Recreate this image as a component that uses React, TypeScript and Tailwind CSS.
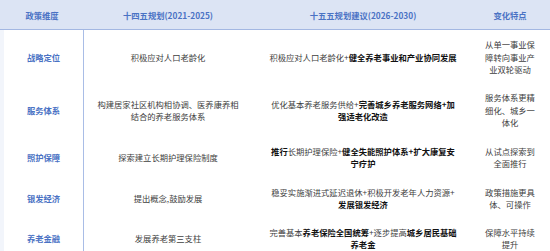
const rows = [
  {
    label: "战略定位",
    h: "h-[54px]",
    old: ["积极应对人口老龄化"],
    next: [[["积极应对人口老龄化+", false], ["健全养老事业和产业协同发展", true]]],
    change: ["从单一事业保", "障转向事业产", "业双轮驱动"],
  },
  {
    label: "服务体系",
    h: "h-[52px]",
    old: ["构建居家社区机构相协调、医养康养相", "结合的养老服务体系"],
    next: [
      [["优化基本养老服务供给+", false], ["完善城乡养老服务网络+加", true]],
      [["强适老化改造", true]],
    ],
    change: ["服务体系更精", "细化、城乡一", "体化"],
  },
  {
    label: "照护保障",
    h: "h-[42px]",
    old: ["探索建立长期护理保险制度"],
    next: [
      [["推行", true], ["长期护理保险+", false], ["健全失能照护体系+扩大康复安", true]],
      [["宁疗护", true]],
    ],
    change: ["从试点探索到", "全面推行"],
  },
  {
    label: "银发经济",
    h: "h-[40px]",
    old: ["提出概念,鼓励发展"],
    next: [
      [["稳妥实施渐进式延迟退休+积极开发老年人力资源+", false]],
      [["发展银发经济", true]],
    ],
    change: ["政策措施更具", "体、可操作"],
  },
  {
    label: "养老金融",
    h: "h-[40px]",
    old: ["发展养老第三支柱"],
    next: [
      [["完善基本", false], ["养老保险全国统筹", true], ["+逐步提高", false], ["城乡居民基础", true]],
      [["养老金", true]],
    ],
    change: ["保障水平持续", "提升"],
  },
] as { label: string; h: string; old: string[]; next: [string, boolean][][]; change: string[] }[];

export default function App() {
  return (
    <div
      className="w-[550px] h-[251px] overflow-hidden bg-white text-[8.3px] leading-[12.5px] text-[#404040]"
      style={{ fontFamily: '"Noto Sans CJK SC", "Noto Sans", sans-serif' }}
    >
      <div className="grid grid-cols-[84px_168px_222px_1fr] h-[30px] bg-[#dce4f4] border-b border-[#a3b7e2] items-center text-center text-[#4a72c4] font-bold pt-[2px]">
        <div>政策维度</div>
        <div>十四五规划(2021-2025)</div>
        <div>十五五规划建议(2026-2030)</div>
        <div className="pr-[4px]">变化特点</div>
      </div>
      {rows.map((r) => (
        <div key={r.label} className={`grid grid-cols-[84px_168px_222px_1fr] ${r.h} text-center`}>
          <div className="flex items-center justify-center border-l-[4px] border-l-[#f2f5fb] border-r border-r-[#a9bde6] text-[#4a72c4] font-semibold">
            {r.label}
          </div>
          <div className="flex flex-col items-center justify-center">
            {r.old.map((l) => (
              <div key={l}>{l}</div>
            ))}
          </div>
          <div className="flex flex-col items-center justify-center">
            {r.next.map((line, i) => (
              <div key={i} className="whitespace-nowrap">
                {line.map(([t, b], j) => (
                  <span key={j} className={b ? "font-bold text-[#111]" : ""}>
                    {t}
                  </span>
                ))}
              </div>
            ))}
          </div>
          <div className="flex flex-col items-center justify-center pr-[4px]">
            {r.change.map((l) => (
              <div key={l}>{l}</div>
            ))}
          </div>
        </div>
      ))}
    </div>
  );
}
